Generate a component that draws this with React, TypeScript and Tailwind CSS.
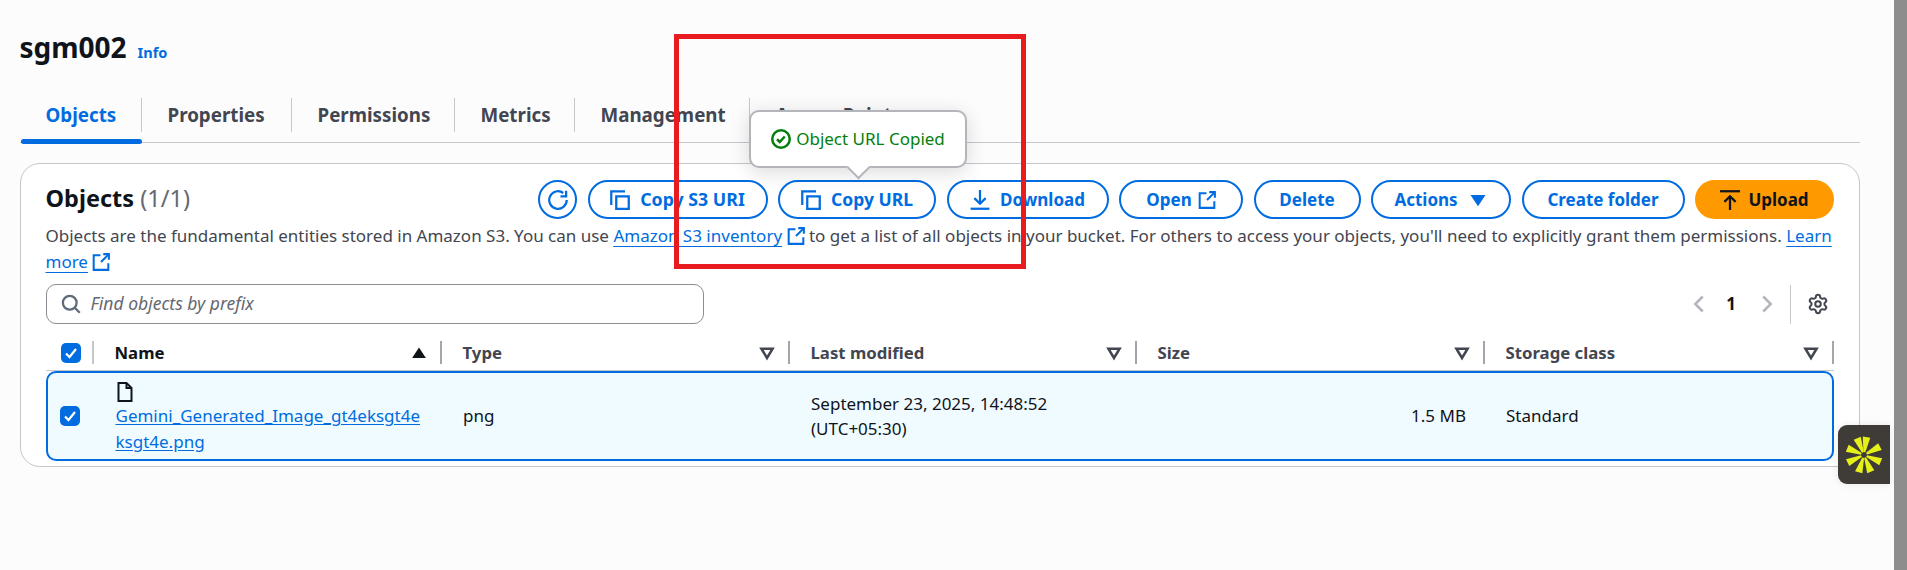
import { type FC, type ReactNode } from 'react';
import { Settings } from 'lucide-react';

const IconBase: FC<{ children: ReactNode; className?: string }> = ({ children, className }) => (
  <svg viewBox="0 0 16 16" fill="none" stroke="currentColor" strokeWidth="1.8" className={`w-5 h-5 shrink-0 ${className ?? ''}`}>
    {children}
  </svg>
);

const IconCopy = () => (
  <IconBase>
    <path d="M5 5h10v10H5z" />
    <path d="M1 12V1h11" />
  </IconBase>
);

const IconRefresh = () => (
  <IconBase>
    <path d="M15 8a7 7 0 1 1-2.8-5.6" />
    <path d="M14.5 0.5v4.5H10" />
  </IconBase>
);

const IconDownload = () => (
  <IconBase>
    <path d="M8 0v11" />
    <path d="M3.5 6.5L8 11l4.5-4.5" />
    <path d="M0.5 15h15" />
  </IconBase>
);

const IconUpload = () => (
  <IconBase>
    <path d="M0 1h16" />
    <path d="M8 16V5" />
    <path d="M3.5 9.5L8 5l4.5 4.5" />
  </IconBase>
);

const IconExternal = () => (
  <IconBase className="!w-[18px] !h-[18px]">
    <path d="M14.5 9v6H1.5V2h6" />
    <path d="M10 1h5v5" />
    <path d="M15 1L8 8" />
  </IconBase>
);

const IconSearch = () => (
  <IconBase className="text-[#5f6b7a]">
    <circle cx="7" cy="7" r="5.5" />
    <path d="M11 11l4 4" />
  </IconBase>
);

const IconCheck: FC = () => (
  <svg viewBox="0 0 20 20" className="w-5 h-5 rounded-[5px] bg-[#006ce0]" fill="none" stroke="white" strokeWidth="2.2">
    <path d="M5 10.5l3.5 3.5 6.5-8" />
  </svg>
);

const FilterCaret: FC = () => (
  <svg viewBox="0 0 16 16" className="w-5 h-5 text-[#424650]" fill="none" stroke="currentColor" strokeWidth="2">
    <path d="M3.5 4.5h9L8 12z" />
  </svg>
);

const HeaderCell: FC<{ label: string; sorted?: boolean }> = ({ label, sorted }) => (
  <div className="flex items-center h-[23px] border-r-2 border-[#a4a4ad] pl-[21px] pr-[11px] justify-between text-[16.75px]">
    <span className={`font-bold ${sorted ? 'text-[#0f141a]' : 'text-[#424650]'}`}>{label}</span>
    {sorted ? (
      <svg viewBox="0 0 16 16" className="w-5 h-5 text-[#0f141a]" fill="currentColor">
        <path d="M8 3.5l5.5 8.5h-11z" />
      </svg>
    ) : (
      <FilterCaret />
    )}
  </div>
);

const ActionButton: FC<{ width: string; gap?: string; size?: string; children: ReactNode }> = ({ width, gap = 'gap-[10px]', size = 'text-[17px]', children }) => (
  <button className={`${width} ${gap} ${size} h-[39px] rounded-full border-2 border-[#006ce0] text-[#006ce0] font-bold flex items-center justify-center`}>
    {children}
  </button>
);

const Star: FC = () => (
  <svg viewBox="-20 -20 40 40" className="w-[38px] h-[38px]" fill="#e6f019">
    {[8, 62, 112, 158, 197, 245, 292, 338].map((a) => (
      <polygon key={a} points="-1,-3 1,-3 4,-19 -4,-19" transform={`rotate(${a})`} />
    ))}
  </svg>
);

export default function App() {
  return (
    <div className="relative flex h-[570px] w-full overflow-hidden bg-[#fcfcfc] text-[17px] leading-[25.5px] text-[#0f141a] font-['Noto_Sans',sans-serif]">
      <main className="flex-1 min-w-0 pl-[19.5px] pr-[34px] pt-[28px]">
        <div className="flex items-baseline gap-[11px] h-[41px]">
          <h1 className="text-[28px] leading-[38px] font-bold">sgm002</h1>
          <a className="text-[14.5px] font-bold text-[#006ce0]">Info</a>
        </div>

        <div className="mt-[29px] flex h-[45px] border-b border-[#c6c6cd] font-bold text-[18.75px] text-[#424650]">
          <div className="relative w-[122px] h-[45px]">
            <div className="h-[34px] flex items-center pl-[26px] border-r border-[#c6c6cd] text-[#006ce0]">Objects</div>
            <div className="absolute left-[1.5px] right-0 bottom-[-1px] h-[5px] rounded-full bg-[#006ce0]" />
          </div>
          <div className="w-[150px] h-[34px] flex items-center pl-[26px] border-r border-[#c6c6cd]">Properties</div>
          <div className="w-[163px] h-[34px] flex items-center pl-[26px] border-r border-[#c6c6cd]">Permissions</div>
          <div className="w-[120px] h-[34px] flex items-center pl-[26px] border-r border-[#c6c6cd]">Metrics</div>
          <div className="w-[175px] h-[34px] flex items-center pl-[26px] border-r border-[#c6c6cd]">Management</div>
          <div className="h-[34px] flex items-center pl-[26px]">Access Points</div>
        </div>

        <section className="mt-[20px] h-[304px] rounded-[20px] border border-[#c6c6cd] bg-white pl-[25px] pr-[25px] pt-[16px]">
          <div className="flex items-center justify-between h-[39px]">
            <h2 className="text-[23.5px] font-bold -mt-[2px]">
              Objects <span className="font-normal text-[#656871]">(1/1)</span>
            </h2>
            <div className="flex items-center gap-[10.5px]">
              <button className="w-[39px] h-[39px] rounded-full border-2 border-[#006ce0] text-[#006ce0] flex items-center justify-center">
                <IconRefresh />
              </button>
              <ActionButton width="w-[180px]" size="text-[17.75px]"><IconCopy />Copy S3 URI</ActionButton>
              <ActionButton width="w-[158px]" size="text-[17.5px]"><IconCopy />Copy URL</ActionButton>
              <ActionButton width="w-[162px]"><IconDownload />Download</ActionButton>
              <ActionButton width="w-[124px]" gap="gap-[6px]">Open<IconExternal /></ActionButton>
              <ActionButton width="w-[107px]">Delete</ActionButton>
              <ActionButton width="w-[140px]">
                Actions
                <svg viewBox="0 0 16 16" className="w-5 h-5" fill="currentColor"><path d="M2 4h12L8 13z" /></svg>
              </ActionButton>
              <ActionButton width="w-[163px]">Create folder</ActionButton>
              <button className="w-[139px] h-[39px] rounded-full bg-[#ff9900] font-bold flex items-center justify-center gap-[8px]">
                <IconUpload />Upload
              </button>
            </div>
          </div>

          <p className="mt-[4px] text-[#424650]">
            Objects are the fundamental entities stored in Amazon S3. You can use{' '}
            <a className="text-[#006ce0] underline underline-offset-4">Amazon S3 inventory</a>{' '}
            <span className="inline-block align-[-3px] text-[#006ce0]"><IconExternal /></span>{' '}
            to get a list of all objects in your bucket. For others to access your objects, you'll need to explicitly grant them permissions.{' '}
            <a className="text-[#006ce0] underline underline-offset-4">Learn</a>{' '}
            <a className="text-[#006ce0] underline underline-offset-4">more</a>{' '}
            <span className="inline-block align-[-3px] text-[#006ce0]"><IconExternal /></span>
          </p>

          <div className="mt-[10px] flex items-center justify-between h-[40px]">
            <div className="w-[658px] h-[40px] rounded-[10px] border-[1.5px] border-[#8c8c94] flex items-center gap-[10px] pl-[14px]">
              <IconSearch />
              <span className="italic text-[17.5px] text-[#656871]">Find objects by prefix</span>
            </div>
            <div className="flex items-center h-[39px] pr-[5px] text-[#0f141a]">
              <svg viewBox="0 0 16 16" className="w-5 h-5 text-[#b4b4bb] mr-[15px]" fill="none" stroke="currentColor" strokeWidth="2"><path d="M11 2L5 8l6 6" /></svg>
              <span className="font-bold w-[14px] text-center">1</span>
              <svg viewBox="0 0 16 16" className="w-5 h-5 text-[#b4b4bb] ml-[19px] mr-[13px]" fill="none" stroke="currentColor" strokeWidth="2"><path d="M5 2l6 6-6 6" /></svg>
              <div className="h-[39px] border-l border-[#c6c6cd] pl-[16px] flex items-center text-[#424650]">
                <Settings size={22} strokeWidth={2.2} />
              </div>
            </div>
          </div>

          <div className="mt-[17px] h-[30px] grid grid-cols-[48px_348px_348px_347px_348px_349px] border-b border-[#c6c6cd] pb-[6px]">
            <div className="flex items-center h-[23px] pl-[15px] border-r-2 border-[#c6c6cd]"><IconCheck /></div>
            <HeaderCell label="Name" sorted />
            <HeaderCell label="Type" />
            <HeaderCell label="Last modified" />
            <HeaderCell label="Size" />
            <HeaderCell label="Storage class" />
          </div>

          <div className="h-[90px] rounded-[10px] border-[2.5px] border-[#006ce0] bg-[#f0fbff] grid grid-cols-[45.5px_348px_348px_347px_348px_346.5px] items-center">
            <div className="pl-[12.5px]"><IconCheck /></div>
            <div className="pl-[22.5px] pt-[4px]">
              <svg viewBox="0 0 16 20" className="w-[17px] h-[20px] mb-[1px] text-[#0f141a]" fill="none" stroke="currentColor" strokeWidth="2">
                <path d="M2 1h8l5 5v13H2z" />
                <path d="M10 1v5h5" />
              </svg>
              <a className="block w-[308px] break-all text-[#006ce0] underline underline-offset-2">Gemini_Generated_Image_gt4eksgt4eksgt4e.png</a>
            </div>
            <div className="pl-[22px]">png</div>
            <div className="pl-[22px]">September 23, 2025, 14:48:52<br />(UTC+05:30)</div>
            <div className="text-right pr-[18px]">1.5 MB</div>
            <div className="pl-[22px]">Standard</div>
          </div>
        </section>
      </main>
      <div className="w-[13px] bg-[#8d8d8d] shrink-0" />

      {/* toast over the Copy URL button */}
      <div className="absolute left-[749px] top-[110px] w-[218px] h-[58px] rounded-[10px] border-2 border-[#b4b4bb] bg-white shadow-[0_4px_20px_rgba(0,0,0,0.15)] flex items-center justify-center gap-[5px] text-[#037f0c]">
        <svg viewBox="0 0 16 16" className="w-5 h-5" fill="none" stroke="currentColor" strokeWidth="2">
          <circle cx="8" cy="8" r="7" />
          <path d="M4.8 8.2l2.2 2.2 4-4.4" />
        </svg>
        Object URL Copied
        <div className="absolute left-[99px] bottom-[-10px] w-[17px] h-[17px] rotate-45 bg-white border-r-2 border-b-2 border-[#b4b4bb]" />
      </div>

      {/* red annotation box */}
      <div className="absolute left-[674px] top-[34px] w-[352px] h-[235px] border-[5px] border-[#e81c1f]" />

      {/* floating widget */}
      <div className="absolute left-[1838px] top-[425px] w-[52px] h-[59px] rounded-l-[9px] bg-[#3f3b37] flex items-center justify-center shadow-[0_0_8px_rgba(0,0,0,0.08)]">
        <Star />
      </div>
    </div>
  );
}
